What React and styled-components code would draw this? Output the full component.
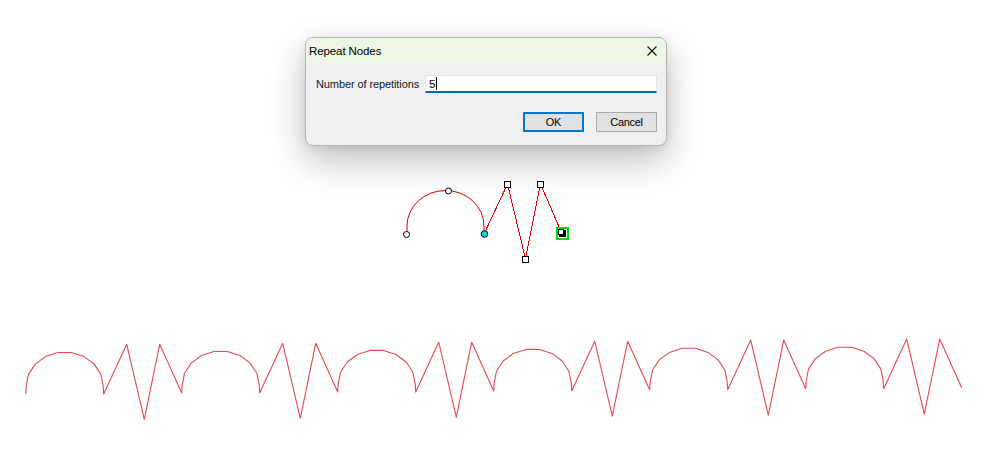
import styled, { createGlobalStyle } from "styled-components";

const GlobalStyle = createGlobalStyle`
  html, body {
    margin: 0;
    padding: 0;
    background: #ffffff;
    overflow: hidden;
  }
  body {
    font-family: "Liberation Sans", Arial, sans-serif;
  }
`;

const Canvas = styled.div`
  position: relative;
  width: 1001px;
  height: 458px;
  background: #ffffff;
`;

const Drawing = styled.svg`
  display: block;
  width: 1001px;
  height: 458px;
`;

const Dialog = styled.div`
  position: absolute;
  left: 305px;
  top: 37px;
  width: 362px;
  height: 109px;
  box-sizing: border-box;
  display: flex;
  flex-direction: column;
  background: #f0f0f0;
  border: 1px solid #b4b4b4;
  border-radius: 8px;
  overflow: hidden;
  box-shadow: 0 14px 36px rgba(0, 0, 0, 0.26), 0 2px 8px rgba(0, 0, 0, 0.08);
  font-size: 11px;
  color: #000;
`;

const TitleBar = styled.div`
  height: 25px;
  display: flex;
  align-items: center;
  justify-content: space-between;
  padding: 0 9px 0 3px;
  background: #ecf7e5;
`;

const Title = styled.span`
  font-size: 11.5px;
  letter-spacing: -0.1px;
`;

const CloseIcon = () => (
  <svg width="10" height="10" viewBox="0 0 10 10">
    <path d="M0.5 0.5 L9.5 9.5 M9.5 0.5 L0.5 9.5" stroke="#111" strokeWidth="1.1" />
  </svg>
);

const Body = styled.div`
  flex: 1;
  display: flex;
  flex-direction: column;
  padding: 12px 9px 0 10px;
`;

const FieldRow = styled.div`
  display: flex;
  align-items: center;
  justify-content: space-between;
`;

const Label = styled.span`
  font-size: 11px;
  letter-spacing: -0.1px;
  white-space: nowrap;
  color: #101828;
`;

const Input = styled.div`
  width: 232px;
  height: 18px;
  box-sizing: border-box;
  display: flex;
  align-items: center;
  padding-left: 3px;
  background: #ffffff;
  border: 1px solid #e4e4e4;
  border-bottom: 2px solid #0067c0;
  font-size: 11.5px;
`;

const Caret = styled.span`
  width: 1px;
  height: 13px;
  margin-left: 1px;
  background: #000;
`;

const ButtonRow = styled.div`
  display: flex;
  justify-content: flex-end;
  gap: 12px;
  margin-top: 19px;
`;

const Button = styled.button`
  width: 61px;
  height: 20px;
  box-sizing: border-box;
  padding: 0;
  font-family: inherit;
  font-size: 11px;
  letter-spacing: -0.3px;
  color: #000;
  background: #e1e1e1;
  border: ${(p) => (p.$primary ? "2px solid #0078d4" : "1px solid #adadad")};
`;

// base shape, relative to its first node
const arcPts = () => {
  const pts = [[0, 0]];
  const steps = 9;
  for (let i = 0; i <= steps; i++) {
    const a = Math.PI - (Math.PI * i) / steps;
    pts.push([39 + 38.5 * Math.cos(a), -8 - 34 * Math.sin(a)]);
  }
  pts.push([78, 0]);
  return pts;
};

const zig = [
  [101, -49.7],
  [118.6, 25.3],
  [134, -49.7],
  [156, -1],
];

const repeated = () => {
  let pts = [];
  for (let r = 0; r < 6; r++) {
    const ox = 25.7 + r * 156;
    const oy = 394 - r * 1.05;
    [...arcPts(), ...zig].forEach(([x, y]) => pts.push(`${(ox + x).toFixed(1)},${(oy + y).toFixed(1)}`));
  }
  return pts.join(" ");
};

const RED = "#e00000";

const App = () => {
  return (
    <Canvas>
      <GlobalStyle />
      <Drawing viewBox="0 0 1001 458">
        <polyline points={repeated()} fill="none" stroke="#e8494d" strokeWidth="1.1" strokeLinejoin="round" />

        <g shapeRendering="crispEdges">
          <path
            d="M407 234.5 L407 226 A38.5 35.5 0 0 1 484 226 L484 234"
            fill="none"
            stroke={RED}
            strokeWidth="1"
            shapeRendering="auto"
          />
          <polyline points="484,234 507.5,184 525.5,259 540.5,184 561.5,232.5" fill="none" stroke={RED} strokeWidth="1" />
        </g>

        <circle cx="406.5" cy="234.5" r="3" fill="#fff" stroke="#000" />
        <circle cx="448.5" cy="191" r="3" fill="#fff" stroke="#000" />
        <circle cx="484.5" cy="234" r="3.3" fill="#00dcdc" stroke="#000" />
        <rect x="504.5" y="181.5" width="6" height="6" fill="#fff" stroke="#000" />
        <rect x="522.5" y="256.5" width="6" height="6" fill="#fff" stroke="#000" />
        <rect x="537.5" y="181.5" width="6" height="6" fill="#fff" stroke="#000" />
        <rect x="557" y="228" width="11" height="11" fill="none" stroke="#00dd00" strokeWidth="2" />
        <rect x="559" y="230" width="7" height="7" fill="#000" />
        <rect x="558.5" y="229.5" width="5" height="5" fill="#fff" stroke="#000" />
      </Drawing>

      <Dialog>
        <TitleBar>
          <Title>Repeat Nodes</Title>
          <CloseIcon />
        </TitleBar>
        <Body>
          <FieldRow>
            <Label>Number of repetitions</Label>
            <Input>
              5<Caret />
            </Input>
          </FieldRow>
          <ButtonRow>
            <Button $primary>OK</Button>
            <Button>Cancel</Button>
          </ButtonRow>
        </Body>
      </Dialog>
    </Canvas>
  );
};

export default App;
